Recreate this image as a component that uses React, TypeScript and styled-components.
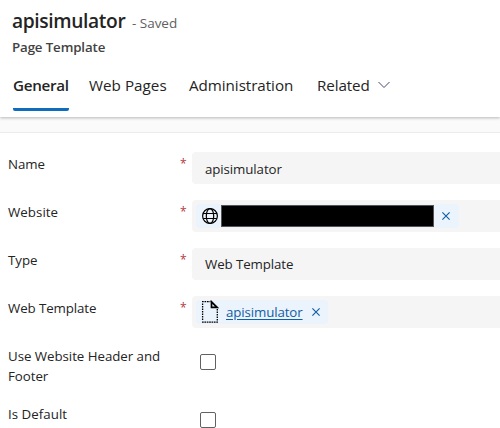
import React from "react";
import styled, { createGlobalStyle } from "styled-components";

const GlobalStyle = createGlobalStyle`
  * { box-sizing: border-box; }
  html, body { margin: 0; background: #fff; overflow: hidden; }
  body { font-family: "Open Sans", "Noto Sans", sans-serif; color: #242424; }
`;

const Page = styled.div`
  width: 100%;
  height: 428px;
  overflow: hidden;
  background: #fafafa;
`;

const Header = styled.header`
  position: relative;
  height: 117px;
  padding: 7px 12px 0;
  background: #fff;
  box-shadow: 0 1px 3px rgba(0, 0, 0, 0.27);
`;

const TitleRow = styled.div`
  display: flex;
  align-items: baseline;
  height: 28px;
  line-height: 28px;
`;

const Title = styled.h1`
  margin: 0;
  width: 120px;
  font-size: 19.2px;
  font-weight: 600;
  letter-spacing: -0.36px;
`;

const SaveState = styled.span`
  font-size: 13.5px;
  letter-spacing: -0.03px;
  color: #616161;
`;

const Subtitle = styled.div`
  height: 20px;
  margin-top: 2px;
  font-size: 13.3px;
  font-weight: 600;
  line-height: 20px;
  letter-spacing: -0.13px;
  color: #424242;
`;

const Tabs = styled.nav`
  display: flex;
  height: 43px;
  margin-top: 11px;
  padding-left: 1px;
`;

const Tab = styled.div<{ $width: number; $active?: boolean; $track: number }>`
  display: flex;
  align-items: center;
  flex: none;
  width: ${(p) => p.$width}px;
  height: 43px;
  margin-right: 20px;
  padding-bottom: 7px;
  border-bottom: 3px solid transparent;
  font-size: 15.2px;
  font-weight: ${(p) => (p.$active ? 600 : 400)};
  line-height: 22px;
  letter-spacing: ${(p) => p.$track}px;
  white-space: nowrap;
  background: ${(p) =>
    p.$active ? "linear-gradient(#0f6cbd, #0f6cbd) bottom / 100% 3px no-repeat" : "none"};
  background-origin: border-box;
  border-radius: 2px;
  svg { margin-left: 8px; flex: none; }
`;

const Form = styled.main`
  display: flex;
  flex-direction: column;
  gap: 16px;
  height: 296px;
  margin-top: 15px;
  padding: 19px 0 0 8px;
  border-top: 1px solid #ebebeb;
  background: #fff;
`;

const Row = styled.div<{ $height: number }>`
  display: grid;
  grid-template-columns: 172px 12px 1fr;
  flex: none;
  height: ${(p) => p.$height}px;
`;

const Label = styled.label<{ $track?: number }>`
  padding-top: 2px;
  font-size: 13.3px;
  line-height: 20px;
  letter-spacing: ${(p) => p.$track ?? -0.04}px;
`;

const Required = styled.span`
  padding: 2px 0 0;
  font-size: 12px;
  line-height: 20px;
  color: #b4373d;
`;

const Field = styled.div<{ $lookup?: boolean; $raise?: boolean }>`
  display: flex;
  align-items: center;
  height: 32px;
  padding: ${(p) => (p.$lookup ? "0 0 0 4px" : p.$raise ? "0 0 0 13px" : "2px 0 0 13px")};
  border-radius: 4px 0 0 4px;
  background: #f5f5f5;
  font-size: 13.3px;
`;

const Value = styled.span`
  line-height: 20px;
  letter-spacing: -0.1px;
`;

const Pill = styled.div<{ $width: number }>`
  display: flex;
  align-items: center;
  width: ${(p) => p.$width}px;
  height: 24px;
  border-radius: 4px;
  background: #ebf3fc;
  svg { flex: none; }
`;

const Redacted = styled.span`
  width: 213px;
  height: 22px;
  margin: 0 7px 0 3px;
  border: 1px solid #555;
  background: #000;
`;

const RecordLink = styled.a`
  width: 77px;
  margin: 0 8px 0 7px;
  line-height: 20px;
  letter-spacing: -0.12px;
  color: #115ea3;
  text-decoration: underline;
  text-underline-offset: 2px;
`;

const Checkbox = styled.span`
  width: 16px;
  height: 16px;
  margin: 10px 0 0 8px;
  border: 1px solid #616161;
  border-radius: 2px;
`;

const ChevronIcon = () => (
  <svg width="12" height="8" viewBox="0 0 12 8" fill="none" stroke="#4b3a6b" strokeWidth="0.95">
    <path d="M.5 1 6 6.5 11.500 1" />
  </svg>
);

const GlobeIcon = () => (
  <svg width="22" height="24" viewBox="0 0 22 24" fill="none" stroke="#000" strokeWidth="1.200">
    <circle cx="14" cy="12" r="7.400" />
    <ellipse cx="14" cy="12" rx="3.700" ry="7.400" />
    <path d="M7.200 9.500H20.800M7.200 14.500H20.800" />
  </svg>
);

const PageIcon = () => (
  <svg width="23" height="24" viewBox="0 0 23 24" fill="none" stroke="#000">
    <path d="M6 1.600H14.500" strokeWidth="1.300" strokeDasharray="1.700 .8" />
    <path d="M6.600 3.500V21M21.300 9V21" strokeWidth="1.300" strokeDasharray="1.600 .9" />
    <path d="M6 22.200H22" strokeWidth="1.300" strokeDasharray="1.700 .68" />
    <path d="M15.500 1.800V7.300H21Z" strokeWidth="1.700" />
  </svg>
);

const CloseIcon = () => (
  <svg width="10" height="10" viewBox="0 0 10 10" fill="none" stroke="#115ea3" strokeWidth="1.15">
    <path d="M1.400 1.400 8.600 8.600M8.600 1.400 1.400 8.600" />
  </svg>
);

export default function App() {
  return (
    <>
      <GlobalStyle />
      <Page>
        <Header>
          <TitleRow>
            <Title>apisimulator</Title>
            <SaveState>- Saved</SaveState>
          </TitleRow>
          <Subtitle>Page Template</Subtitle>
          <Tabs>
            <Tab $width={56} $track={-0.3} $active>General</Tab>
            <Tab $width={80} $track={0.03}>Web Pages</Tab>
            <Tab $width={108} $track={-0.05}>Administration</Tab>
            <Tab $width={74} $track={-0.1}>Related<ChevronIcon /></Tab>
          </Tabs>
        </Header>
        <Form>
          <Row $height={32}>
            <Label>Name</Label>
            <Required>*</Required>
            <Field><Value>apisimulator</Value></Field>
          </Row>
          <Row $height={32}>
            <Label $track={0.05}>Website</Label>
            <Required>*</Required>
            <Field $lookup>
              <Pill $width={263}><GlobeIcon /><Redacted /><CloseIcon /></Pill>
            </Field>
          </Row>
          <Row $height={32}>
            <Label>Type</Label>
            <Required>*</Required>
            <Field $raise><Value>Web Template</Value></Field>
          </Row>
          <Row $height={32}>
            <Label $track={-0.1}>Web Template</Label>
            <Required>*</Required>
            <Field $lookup>
              <Pill $width={132}><PageIcon /><RecordLink>apisimulator</RecordLink><CloseIcon /></Pill>
            </Field>
          </Row>
          <Row $height={42}>
            <Label>Use Website Header and Footer</Label>
            <span />
            <Checkbox />
          </Row>
          <Row $height={32}>
            <Label $track={0.03}>Is Default</Label>
            <span />
            <Checkbox />
          </Row>
        </Form>
      </Page>
    </>
  );
}
